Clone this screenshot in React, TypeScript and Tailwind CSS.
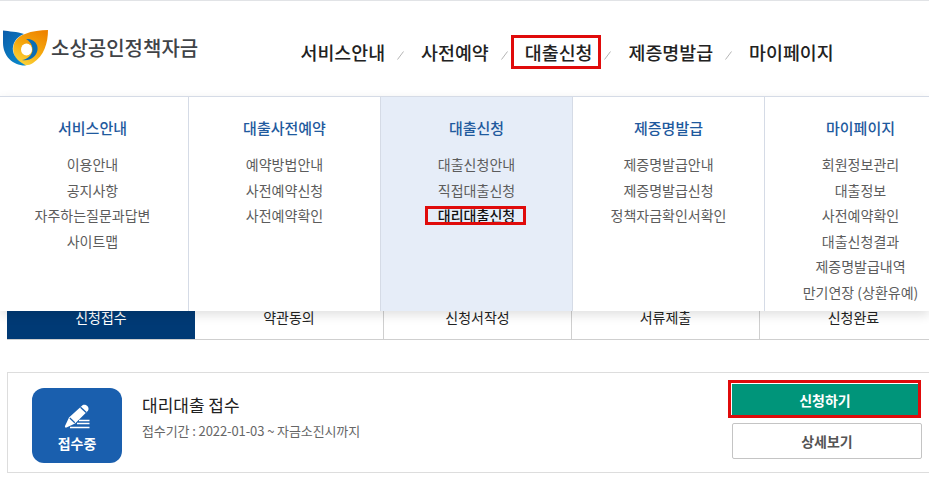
import React from 'react';

const navItems = ['서비스안내', '사전예약', '대출신청', '제증명발급', '마이페이지'];

const menus = [
  { title: '서비스안내', links: ['이용안내', '공지사항', '자주하는질문과답변', '사이트맵'] },
  { title: '대출사전예약', links: ['예약방법안내', '사전예약신청', '사전예약확인'] },
  { title: '대출신청', links: ['대출신청안내', '직접대출신청', '대리대출신청'], active: true },
  { title: '제증명발급', links: ['제증명발급안내', '제증명발급신청', '정책자금확인서확인'] },
  { title: '마이페이지', links: ['회원정보관리', '대출정보', '사전예약확인', '대출신청결과', '제증명발급내역', '만기연장 (상환유예)'] },
];

const steps = ['신청접수', '약관동의', '신청서작성', '서류제출', '신청완료'];

function Logo() {
  return (
    <svg width="46" height="37" viewBox="0 0 46 37" className="shrink-0">
      <defs>
        <linearGradient id="logoBlue" x1="0" y1="0" x2="0.7" y2="1">
          <stop offset="0" stopColor="#0a5cab" />
          <stop offset="1" stopColor="#0a86c8" />
        </linearGradient>
        <linearGradient id="logoOrange" x1="0.8" y1="0" x2="0.3" y2="1">
          <stop offset="0" stopColor="#ee8300" />
          <stop offset="0.55" stopColor="#f5a90e" />
          <stop offset="1" stopColor="#fbd33a" />
        </linearGradient>
      </defs>
      <path d="M46 1C39 1 30 2 23 5C14 8 10 15 11.500 23C12.500 29 17 34 22 36C25 36.500 28 36 31 34C42 27 46 14 46 1Z" fill="url(#logoOrange)" />
      <path d="M1 1.500C7 2.500 15 2.500 22 5C14 8 10 15 11 22C12 28 17 33 24 36.500C11 37 1 27 1 14Z" fill="url(#logoBlue)" />
      <ellipse cx="24.500" cy="20.500" rx="5.500" ry="6" fill="#fff" />
      <path d="M24 10C31 9 36.500 14.500 35.500 21C34.500 27.500 28 32.500 20 31C25 30.500 30.500 26.500 30.500 20.500C30.500 15.500 27.500 12 24 10Z" fill="#0a6db5" />
    </svg>
  );
}

function PenIcon() {
  return (
    <svg width="26" height="26" viewBox="0 0 26 26" className="shrink-0">
      <path d="M18.500 1.200C20 0.300 22 0.700 23.300 2C24.600 3.300 25 5.200 24 6.700L11 19.500L2.500 23.500C1.500 24 0.600 23 1 22L5 13.500Z" fill="#fff" />
      <path d="M16.500 3.300L22.200 8.600" stroke="#1a5fae" strokeWidth="1.400" fill="none" />
      <path d="M5.800 14L10.800 18.800" stroke="#1a5fae" strokeWidth="1.200" fill="none" />
      <path d="M15 16.500H25.500M13 19.500H25.500M6 23.500H25.500" stroke="#fff" strokeWidth="1.300" fill="none" />
    </svg>
  );
}

export default function App() {
  return (
    <div className="relative h-[496px] w-full overflow-hidden bg-white font-['Noto_Sans_CJK_KR','Noto_Sans',sans-serif]">
      {/* header */}
      <header className="flex h-[97px] items-center border-t border-t-[#e1e3e6] pb-[3px]">
        <div className="ml-[2px] flex w-[298.5px] items-center gap-[3px]">
          <Logo />
          <span className="text-[20px] font-medium leading-none text-[#404347]">소상공인정책자금</span>
        </div>
        <nav className="mt-[8px] flex items-center text-[18.4px] font-medium text-[#222]">
          {navItems.map((item, i) => (
            <React.Fragment key={item}>
              <span className="relative leading-[34px]">
                {item}
                {i === 2 && <span className="absolute -left-[14px] -right-[9px] top-0 h-[34px] border-[3px] border-[#e00b0b]" />}
              </span>
              {i < navItems.length - 1 && (
                <svg width="7" height="9" viewBox="0 0 7 9" className="ml-[12px] mr-[17px] mt-[8px]">
                  <path d="M0.500 8.500L6.500 0.500" stroke="#b5b5b5" strokeWidth="1" />
                </svg>
              )}
            </React.Fragment>
          ))}
        </nav>
      </header>

      {/* steps, the open menu lies over the top of them */}
      <main className="pt-[198px]">
        <ul className="ml-[7px] flex h-[45px] w-[964px] border-b border-[#cfcfcf] text-[14px] text-[#222]">
          {steps.map((step, i) => (
            <li
              key={step}
              className={
                i === 0
                  ? 'flex w-[188px] items-center justify-center bg-[#003a75] text-white'
                  : i === 1
                    ? 'flex w-[189px] items-center justify-center border-r border-[#cfcfcf]'
                    : 'flex w-[188px] items-center justify-center border-r border-[#cfcfcf]'
              }
            >
              {step}
            </li>
          ))}
        </ul>

        <section className="ml-[7px] mt-[32px] flex h-[101px] w-[960px] items-start border border-r-0 border-[#dddddd] pl-[24px]">
          <div className="mt-[15px] flex h-[75px] w-[90px] flex-col items-center rounded-[12px] bg-[#1a5fae] pt-[16px] text-white">
            <PenIcon />
            <span className="mt-[4px] text-[14px] font-bold leading-[18px]">접수중</span>
          </div>
          <div className="ml-[20px] mt-[20px]">
            <h3 className="text-[17px] font-normal leading-[24px] text-[#222]">대리대출 접수</h3>
            <p className="mt-[5px] text-[13px] leading-[18px] tracking-[-0.1px] text-[#666]">접수기간 : 2022-01-03 ~ 자금소진시까지</p>
          </div>
          <div className="ml-auto mr-[45px] mt-[11px] flex w-[190px] flex-col gap-[7px]">
            <button className="relative h-[32px] w-[186px] bg-[#00957a] text-[14px] font-bold text-white">
              신청하기
              <span className="absolute -bottom-[2px] -left-[4px] -right-[3px] -top-[4px] border-[3px] border-[#e00b0b]" />
            </button>
            <button className="h-[36px] rounded-[2px] border border-[#c4c4c4] bg-white text-[14px] font-bold text-[#555]">상세보기</button>
          </div>
        </section>
      </main>

      {/* mega menu */}
      <div className="absolute left-0 top-[96px] h-[215px] w-full overflow-hidden border-t border-[#d5dbe6] bg-white shadow-[0_4px_10px_rgba(0,0,0,0.12)]">
        <div className="-ml-[3px] flex h-full w-[960px]">
          {menus.map((menu) => (
            <div
              key={menu.title}
              className={
                menu.active
                  ? 'w-[192px] shrink-0 border-r border-[#d5dbe6] bg-[#e6edf8] pt-[20px] text-center'
                  : 'w-[192px] shrink-0 border-r border-[#d5dbe6] pt-[20px] text-center'
              }
            >
              <h4 className="text-[15px] font-medium leading-[22px] text-[#1f5a9e]">{menu.title}</h4>
              <ul className="mt-[13px] text-[14px] leading-[25.6px] text-[#5c5c5c]">
                {menu.links.map((link) => (
                  <li key={link}>
                    {link === '대리대출신청' ? (
                      <span className="relative font-medium text-[#111] underline">
                        {link}
                        <span className="absolute -left-[13px] -right-[11px] top-[1px] h-[19px] border-[3px] border-[#e00b0b]" />
                      </span>
                    ) : (
                      link
                    )}
                  </li>
                ))}
              </ul>
            </div>
          ))}
        </div>
      </div>
    </div>
  );
}
